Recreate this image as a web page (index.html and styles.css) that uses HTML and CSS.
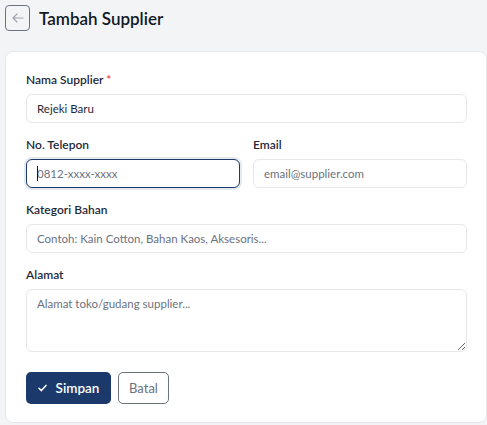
FILE: index.html
```html
<!DOCTYPE html>
<html lang="id">
<head>
<meta charset="utf-8">
<title>Tambah Supplier</title>
<link rel="stylesheet" href="styles.css">
</head>
<body>
<div class="page">
  <header class="page-header">
    <button class="back-btn" type="button" aria-label="Kembali">
      <svg width="12" height="10" viewBox="0 0 12 10" fill="none" stroke="currentColor" stroke-width="1.1" stroke-linecap="round" stroke-linejoin="round"><path d="M11 5H1M5 1L1 5l4 4"/></svg>
    </button>
    <h1 class="page-title">Tambah Supplier</h1>
  </header>

  <form class="card">
    <div class="field">
      <label class="label">Nama Supplier <span class="req">*</span></label>
      <input class="input" type="text" value="Rejeki Baru">
    </div>
    <div class="row">
      <div class="field">
        <label class="label">No. Telepon</label>
        <div class="input-wrap">
          <input class="input is-focus" type="text" placeholder="0812-xxxx-xxxx">
          <span class="caret"></span>
        </div>
      </div>
      <div class="field">
        <label class="label">Email</label>
        <input class="input" type="text" placeholder="email@supplier.com">
      </div>
    </div>
    <div class="field">
      <label class="label">Kategori Bahan</label>
      <input class="input" type="text" placeholder="Contoh: Kain Cotton, Bahan Kaos, Aksesoris...">
    </div>
    <div class="field">
      <label class="label">Alamat</label>
      <textarea class="input textarea" placeholder="Alamat toko/gudang supplier..."></textarea>
    </div>
    <div class="actions">
      <button class="btn btn-primary" type="button">
        <svg width="9" height="8" viewBox="0 0 9 8" fill="none" stroke="currentColor" stroke-width="1.5" stroke-linecap="round" stroke-linejoin="round"><path d="M1 4.2l2.4 2.4L8 1.4"/></svg>
        <span>Simpan</span>
      </button>
      <button class="btn btn-outline" type="button">Batal</button>
    </div>
  </form>
</div>
</body>
</html>
```

FILE: styles.css
```css
* { box-sizing: border-box; }
html, body { margin: 0; padding: 0; }
body {
  background: #f3f4f6;
  font-family: "Lato", "Noto Sans", sans-serif;
  color: #1f2937;
  width: 487px;
  height: 425px;
  overflow: hidden;
}
.page {
  padding: 5px 0 0 5px;
}
.page-header {
  display: flex;
  align-items: center;
  gap: 9px;
  height: 26px;
  margin-bottom: 20px;
}
.back-btn {
  width: 25px;
  height: 26px;
  padding: 0;
  border: 1px solid #6b7280;
  border-radius: 4px;
  background: transparent;
  color: #9ca3af;
  display: flex;
  align-items: center;
  justify-content: center;
}
.page-title {
  margin: 0;
  font-size: 17px;
  font-weight: 600;
  color: #111827;
}
.card {
  width: 482px;
  background: #ffffff;
  border: 1px solid #e5e7eb;
  border-radius: 8px;
  padding: 20px 19px 18px 20px;
  display: flex;
  flex-direction: column;
  gap: 14px;
}
.row {
  display: grid;
  grid-template-columns: 1fr 1fr;
  gap: 13px;
}
.field {
  display: flex;
  flex-direction: column;
  gap: 6px;
}
.label {
  font-size: 12px;
  font-weight: 600;
  line-height: 16px;
  color: #1f2937;
}
.req { color: #ef4444; }
.input {
  width: 100%;
  height: 29px;
  border: 1px solid #e5e7eb;
  border-radius: 6px;
  padding: 0 10px;
  font-family: inherit;
  font-size: 11.5px;
  color: #1f2937;
  background: #fff;
  outline: none;
}
.input::placeholder { color: #6b7280; opacity: 1; }
.input-wrap { position: relative; }
.input.is-focus {
  border: 1.5px solid #1e3a6b;
  box-shadow: 0 0 0 2px #e5e9f0;
}
.caret {
  position: absolute;
  left: 11px;
  top: 7px;
  width: 1px;
  height: 15px;
  background: #111827;
}
.textarea {
  height: 63px;
  padding: 7px 10px;
  resize: vertical;
  display: block;
}
.actions {
  display: flex;
  gap: 7px;
  margin-top: 6px;
}
.btn {
  height: 32px;
  border-radius: 5px;
  font-family: inherit;
  font-size: 13px;
  display: inline-flex;
  align-items: center;
  justify-content: center;
  gap: 9px;
  cursor: pointer;
}
.btn-primary {
  width: 85px;
  background: #1b3a6b;
  color: #fff;
  border: none;
  font-weight: 600;
  font-size: 13.5px;
}
.btn-outline {
  width: 51px;
  background: #fff;
  color: #6b7280;
  border: 1px solid #6b7280;
}
```
